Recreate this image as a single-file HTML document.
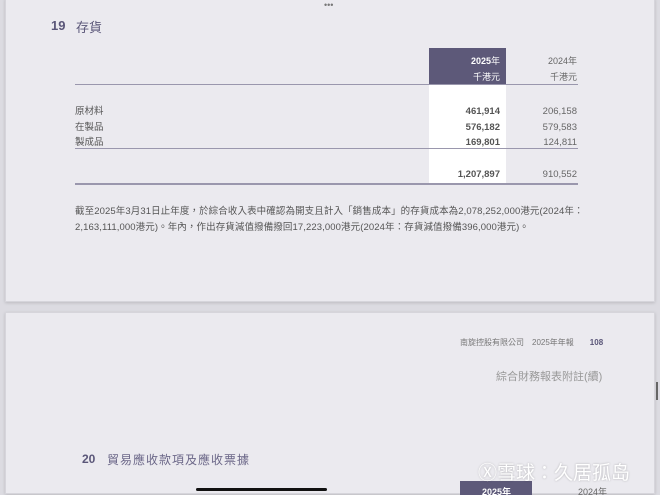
<!DOCTYPE html>
<html style="overflow:hidden;height:495px"><head><meta charset="utf-8"><style>
body{margin:0;width:660px;height:495px;background:#dcdbe1;position:relative;overflow:hidden;font-family:"Liberation Sans","Noto Sans CJK TC",sans-serif;color:#555}
.pg{position:absolute;left:5px;width:648px;background:#ebeaef;border:1px solid #d6d5db;box-shadow:0 1px 3px rgba(0,0,0,.15)}
.a{position:absolute;white-space:nowrap}
.r{text-align:right}
</style></head><body>
<div class="pg" style="top:-2px;height:302px"></div>
<div class="pg" style="top:312px;height:180px"></div>
<div class="a" style="left:324px;top:0;font-size:9px;color:#777">•••</div>
<div class="a" style="left:51px;top:18px;font-size:13px;color:#5a5678;font-weight:bold">19</div>
<div class="a" style="left:76px;top:17px;font-size:13px;color:#5a5678">存貨</div>
<div class="a" style="left:429px;top:48px;width:77px;height:36px;background:#5d5979"></div>
<div class="a" style="left:429px;top:84px;width:77px;height:99px;background:#fff"></div>
<div class="a" style="left:75px;top:84px;width:503px;height:1px;background:#9a97ad"></div>
<div class="a" style="left:75px;top:148px;width:503px;height:1px;background:#9a97ad"></div>
<div class="a" style="left:75px;top:183px;width:503px;height:2px;background:#9a97ad"></div>
<div class="a r" style="left:420px;width:80px;top:54px;font-size:9px;color:#fff;font-weight:bold">2025<span style="font-weight:normal">年</span></div>
<div class="a r" style="left:420px;width:80px;top:70px;font-size:9px;color:#fff">千港元</div>
<div class="a r" style="left:497px;width:80px;top:54px;font-size:9px;color:#666">2024年</div>
<div class="a r" style="left:497px;width:80px;top:70px;font-size:9px;color:#666">千港元</div>
<div class="a" style="left:75px;top:104px;font-size:9.5px;line-height:15.5px;color:#555">原材料<br>在製品<br>製成品</div>
<div class="a r" style="left:420px;width:80px;top:104px;font-size:9.5px;line-height:15.5px;font-weight:bold;color:#555">461,914<br>576,182<br>169,801</div>
<div class="a r" style="left:497px;width:80px;top:104px;font-size:9.5px;line-height:15.5px;color:#666">206,158<br>579,583<br>124,811</div>
<div class="a r" style="left:420px;width:80px;top:169px;font-size:9.5px;font-weight:bold;color:#555">1,207,897</div>
<div class="a r" style="left:497px;width:80px;top:169px;font-size:9.5px;color:#666">910,552</div>
<div class="a" style="left:75px;top:204px;font-size:9.5px;line-height:16px;color:#555;letter-spacing:.1px">截至2025年3月31日止年度，於綜合收入表中確認為開支且計入「銷售成本」的存貨成本為2,078,252,000港元(2024年：<br>2,163,111,000港元)。年內，作出存貨減值撥備撥回17,223,000港元(2024年：存貨減值撥備396,000港元)。</div>
<div class="a" style="left:460px;top:337px;font-size:8px;color:#777">南旋控股有限公司　2025年年報　　<b style="color:#5a5678">108</b></div>
<div class="a" style="left:496px;top:368px;font-size:11px;color:#999">綜合財務報表附註(續)</div>
<div class="a" style="left:82px;top:452px;font-size:12px;color:#5a5678;font-weight:bold">20</div>
<div class="a" style="left:107px;top:451px;font-size:12px;color:#6b6788;letter-spacing:1px">貿易應收款項及應收票據</div>
<div class="a" style="left:460px;top:481px;width:72px;height:20px;background:#5d5979"></div>
<div class="a" style="left:482px;top:485px;font-size:9px;color:#fff;font-weight:bold">2025年</div>
<div class="a" style="left:578px;top:485px;font-size:9px;color:#666">2024年</div>
<div class="a" style="left:478px;top:458px;font-size:19px;color:#fff;text-shadow:0 0 2px rgba(0,0,0,.25)">Ⓧ雪球：久居孤岛</div>
<div class="a" style="left:196px;top:488px;width:131px;height:3px;border-radius:2px;background:#111"></div>
<div class="a" style="left:656px;top:382px;width:2px;height:18px;background:#666"></div>
</body></html>
